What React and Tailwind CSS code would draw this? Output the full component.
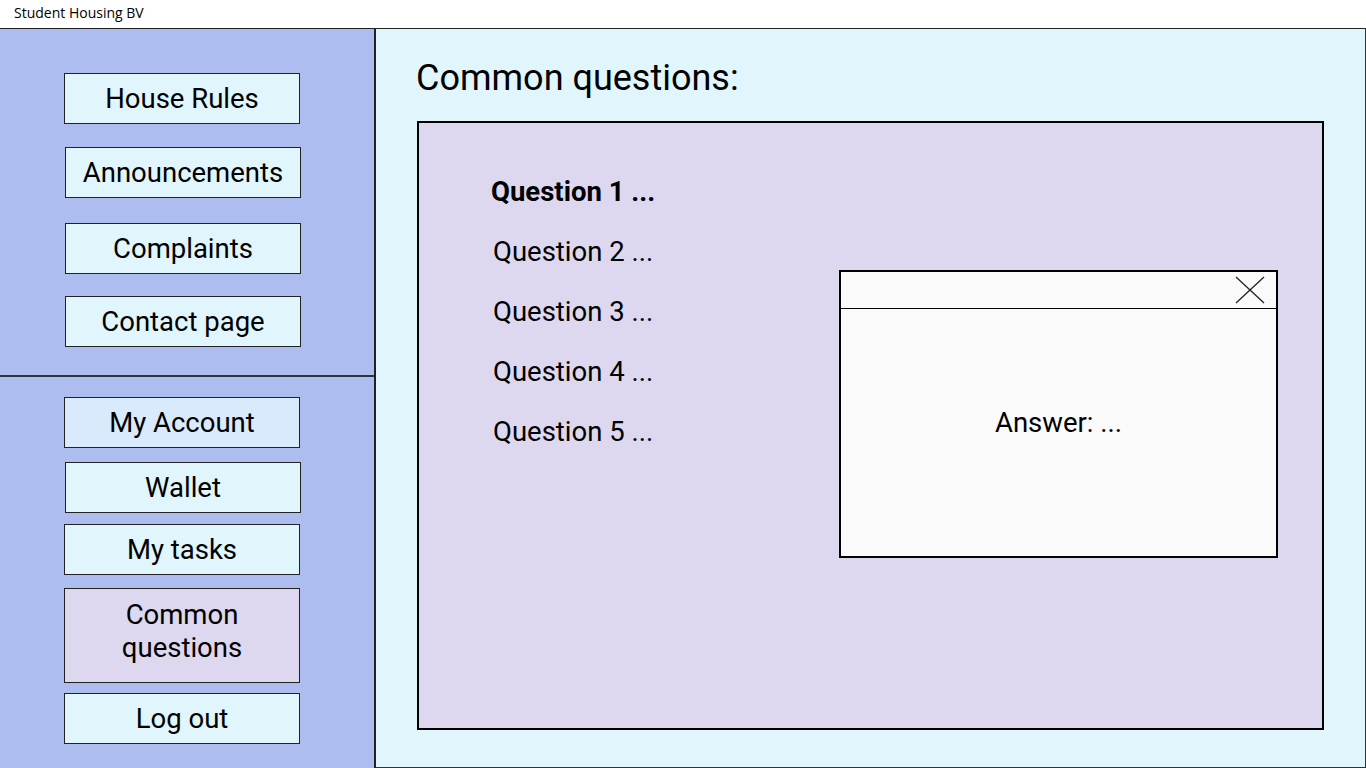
import { useState } from "react";

const topLinks = [
  { label: "House Rules", mt: "mt-[44px] ml-[64px]" },
  { label: "Announcements", mt: "mt-[23px] ml-[65px]" },
  { label: "Complaints", mt: "mt-[25px] ml-[65px]" },
  { label: "Contact page", mt: "mt-[22px] ml-[65px]" },
];

const questions = ["Question 1 ...", "Question 2 ...", "Question 3 ...", "Question 4 ...", "Question 5 ..."];

const NavButton = ({ children, className = "", bg = "bg-[#e0f5fc]" }) => (
  <button
    className={`w-[236px] border border-[#222] ${bg} text-[27.5px] leading-[33px] text-black ${className}`}
  >
    {children}
  </button>
);

const App = () => {
  const [open, setOpen] = useState(true);

  return (
    <div className="flex h-[768px] w-[1366px] flex-col bg-white font-['Roboto',sans-serif]">
      {/* title bar */}
      <div className="h-[29px] shrink-0 border-b border-[#222] bg-white pl-[14px] pt-[4px] font-['Open_Sans',sans-serif] text-[14px] leading-[18px] text-black">
        Student Housing BV
      </div>

      <div className="flex min-h-0 flex-1">
        {/* sidebar */}
        <div className="flex w-[376px] shrink-0 flex-col border-r-2 border-[#222] bg-[#adbdf0]">
          <div className="flex h-[348px] flex-col items-start border-b-2 border-[#333]">
            {topLinks.map((l) => (
              <NavButton key={l.label} className={`h-[51px] ${l.mt}`}>
                {l.label}
              </NavButton>
            ))}
          </div>
          <div className="flex flex-col items-start">
            <NavButton className="ml-[64px] mt-[20px] h-[51px]" bg="bg-[#d9eafc]">
              My Account
            </NavButton>
            <NavButton className="ml-[65px] mt-[14px] h-[51px]">Wallet</NavButton>
            <NavButton className="ml-[64px] mt-[11px] h-[51px]">My tasks</NavButton>
            <NavButton className="ml-[64px] mt-[13px] h-[95px] pb-[10px]" bg="bg-[#ddd8ef]">
              Common
              <br />
              questions
            </NavButton>
            <NavButton className="ml-[64px] mt-[10px] h-[51px]">Log out</NavButton>
          </div>
        </div>

        {/* main */}
        <div className="flex flex-1 flex-col border-r border-b border-[#333] bg-[#e0f5fc] pl-[41px]">
          <h1 className="mt-[29px] -ml-[1px] text-[36px] leading-[40px] text-black">Common questions:</h1>
          <div className="mt-[23px] flex h-[609px] w-[907px] border-2 border-black bg-[#ddd8ef]">
            <ul className="ml-[72px] mt-[53px] flex flex-col gap-[28px] text-[27.5px] leading-[32px] text-black">
              {questions.map((q, i) => (
                <li key={q} className={i === 0 ? "font-bold" : "ml-[2px]"}>
                  {q}
                </li>
              ))}
            </ul>
            {open && (
              <div className="ml-auto mr-[44px] mt-[147px] flex h-[288px] w-[439px] flex-col border-2 border-black bg-[#fafafa]">
                <div className="flex h-[37px] shrink-0 items-center justify-end border-b border-black pr-[10px]">
                  <button onClick={() => setOpen(false)} className="h-[28px] w-[32px]">
                    <svg viewBox="0 0 32 28" width="32" height="28" stroke="#222" strokeWidth="1.3" fill="none">
                      <line x1="2" y1="1" x2="30" y2="27" />
                      <line x1="30" y1="1" x2="2" y2="27" />
                    </svg>
                  </button>
                </div>
                <div className="flex flex-1 items-center justify-center pb-[20px] text-[27.5px] text-black">
                  Answer: ...
                </div>
              </div>
            )}
          </div>
        </div>
      </div>
    </div>
  );
};

export default App;
